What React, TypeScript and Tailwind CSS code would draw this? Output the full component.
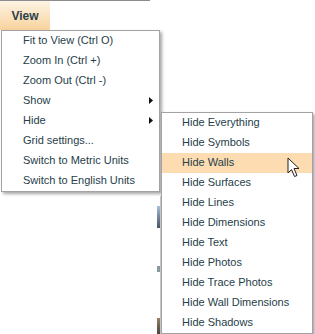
const mainItems = [
  { label: 'Fit to View (Ctrl O)' },
  { label: 'Zoom In (Ctrl +)' },
  { label: 'Zoom Out (Ctrl -)' },
  { label: 'Show', sub: true },
  { label: 'Hide', sub: true },
  { label: 'Grid settings...' },
  { label: 'Switch to Metric Units' },
  { label: 'Switch to English Units' },
]

const hideItems = [
  'Hide Everything',
  'Hide Symbols',
  'Hide Walls',
  'Hide Surfaces',
  'Hide Lines',
  'Hide Dimensions',
  'Hide Text',
  'Hide Photos',
  'Hide Trace Photos',
  'Hide Wall Dimensions',
  'Hide Shadows',
]

function Caret() {
  return (
    <svg width="4" height="7" viewBox="0 0 4 7" className="shrink-0">
      <path d="M0 0 L4 3.5 L0 7 Z" fill="#111" />
    </svg>
  )
}

function Pointer() {
  return (
    <svg width="14" height="21" viewBox="0 0 14 21">
      <path
        d="M1 1 L1 16 L4.5 12.5 L7.5 19.5 L10 18.5 L7 11.5 L12 11.5 Z"
        fill="#fff"
        stroke="#222"
        strokeWidth="1"
        strokeLinejoin="round"
      />
    </svg>
  )
}

export default function App() {
  return (
    <div className="relative w-[315px] h-[334px] bg-white overflow-hidden font-['Liberation_Sans',Arial,sans-serif] text-[11px] text-[#26404a]">
      {/* menu bar */}
      <div className="w-[150px] h-[30px] border-t border-[#8c8c8c]">
        <div className="w-[50px] h-[29px] flex items-center justify-center bg-gradient-to-b from-[#fdf3e4] to-[#f8d39c]">
          <span className="text-[12px] font-bold text-[#2b3f4a]">View</span>
        </div>
      </div>

      {/* main menu */}
      <div className="ml-px w-[159px] bg-white border border-[#a3a3a3] shadow-[2px_2px_3px_rgba(0,0,0,0.35)]">
        {mainItems.map((it) => (
          <div key={it.label} className="h-[20px] flex items-center pl-[21px] pr-[6px] pb-px">
            <span className="flex-1 whitespace-nowrap">{it.label}</span>
            {it.sub && <Caret />}
          </div>
        ))}
      </div>

      {/* canvas content peeking out behind the menus */}
      <div className="absolute left-[157px] top-[196px] w-[4px] h-[138px] bg-white border-r border-[#c8c8c8] flex flex-col">
        <div className="h-[10px]" />
        <div className="h-[22px] bg-gradient-to-b from-[#a9c0de] to-[#4a535c]" />
        <div className="h-[38px]" />
        <div className="h-[6px] bg-[#8a9aa3]" />
        <div className="h-[46px]" />
        <div className="h-[16px] bg-gradient-to-b from-[#9a806a] to-[#4a4540]" />
      </div>

      {/* hide submenu */}
      <div className="absolute left-[161px] top-[112px] w-[152px] bg-white border border-[#a3a3a3] shadow-[2px_2px_3px_rgba(0,0,0,0.35)]">
        {hideItems.map((label) => (
          <div
            key={label}
            className={`h-[20px] flex items-center pl-[20px] pb-px whitespace-nowrap ${label === 'Hide Walls' ? 'bg-[#fcdcb0]' : ''}`}
          >
            {label}
          </div>
        ))}
      </div>

      {/* mouse pointer */}
      <div className="absolute left-[287px] top-[157px]">
        <Pointer />
      </div>
    </div>
  )
}
